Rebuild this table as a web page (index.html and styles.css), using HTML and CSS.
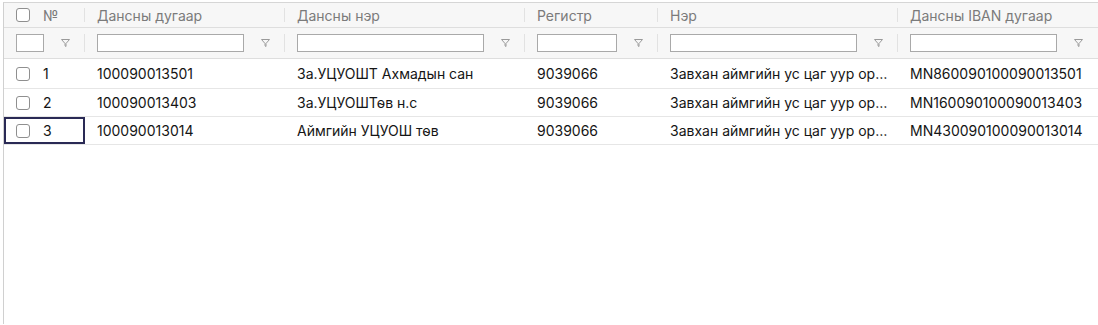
FILE: index.html
```html
<!DOCTYPE html>
<html lang="mn">
<head>
<meta charset="utf-8">
<title>Дансны жагсаалт</title>
<link rel="stylesheet" href="styles.css">
</head>
<body>
<div class="grid">
  <div class="row head">
    <div class="cell sep first"><span class="cb"></span><span class="num">№</span></div>
    <div class="cell sep">Дансны дугаар</div>
    <div class="cell sep">Дансны нэр</div>
    <div class="cell sep">Регистр</div>
    <div class="cell sep">Нэр</div>
    <div class="cell">Дансны IBAN дугаар</div>
  </div>
  <div class="row filter">
    <div class="fcell sep"><span class="inp"></span><span class="fn"><svg width="9" height="8" viewBox="0 0 9 8"><path d="M0.5 0.5H8.5L5 4.5V7.5L4 6.8V4.5Z" fill="none" stroke="#9a9a9a" stroke-width="1" stroke-linejoin="round"/></svg></span></div>
    <div class="fcell sep"><span class="inp"></span><span class="fn"><svg width="9" height="8" viewBox="0 0 9 8"><path d="M0.5 0.5H8.5L5 4.5V7.5L4 6.8V4.5Z" fill="none" stroke="#9a9a9a" stroke-width="1" stroke-linejoin="round"/></svg></span></div>
    <div class="fcell sep"><span class="inp"></span><span class="fn"><svg width="9" height="8" viewBox="0 0 9 8"><path d="M0.5 0.5H8.5L5 4.5V7.5L4 6.8V4.5Z" fill="none" stroke="#9a9a9a" stroke-width="1" stroke-linejoin="round"/></svg></span></div>
    <div class="fcell sep"><span class="inp"></span><span class="fn"><svg width="9" height="8" viewBox="0 0 9 8"><path d="M0.5 0.5H8.5L5 4.5V7.5L4 6.8V4.5Z" fill="none" stroke="#9a9a9a" stroke-width="1" stroke-linejoin="round"/></svg></span></div>
    <div class="fcell sep"><span class="inp"></span><span class="fn"><svg width="9" height="8" viewBox="0 0 9 8"><path d="M0.5 0.5H8.5L5 4.5V7.5L4 6.8V4.5Z" fill="none" stroke="#9a9a9a" stroke-width="1" stroke-linejoin="round"/></svg></span></div>
    <div class="fcell"><span class="inp"></span><span class="fn"><svg width="9" height="8" viewBox="0 0 9 8"><path d="M0.5 0.5H8.5L5 4.5V7.5L4 6.8V4.5Z" fill="none" stroke="#9a9a9a" stroke-width="1" stroke-linejoin="round"/></svg></span></div>
  </div>
  <div class="row data">
    <div class="cell first"><span class="cb"></span><span class="num">1</span></div>
    <div class="cell">100090013501</div>
    <div class="cell">За.УЦУОШТ Ахмадын сан</div>
    <div class="cell">9039066</div>
    <div class="cell clip">Завхан аймгийн ус цаг уур орчны шинжилгээний газар</div>
    <div class="cell">MN860090100090013501</div>
  </div>
  <div class="row data">
    <div class="cell first"><span class="cb"></span><span class="num">2</span></div>
    <div class="cell">100090013403</div>
    <div class="cell">За.УЦУОШТөв н.с</div>
    <div class="cell">9039066</div>
    <div class="cell clip">Завхан аймгийн ус цаг уур орчны шинжилгээний газар</div>
    <div class="cell">MN160090100090013403</div>
  </div>
  <div class="row data">
    <div class="cell first focus"><span class="cb"></span><span class="num">3</span></div>
    <div class="cell">100090013014</div>
    <div class="cell">Аймгийн УЦУОШ төв</div>
    <div class="cell">9039066</div>
    <div class="cell clip">Завхан аймгийн ус цаг уур орчны шинжилгээний газар</div>
    <div class="cell">MN430090100090013014</div>
  </div>
</div>
</body>
</html>
```
FILE: styles.css
```css
html, body {
  margin: 0;
  background: #fff;
}
body {
  padding: 2px 0 0 3px;
  font-family: Inter, "Noto Sans", "DejaVu Sans", sans-serif;
  font-size: 14px;
  color: #151515;
  overflow: hidden;
}
.grid {
  border-top: 1px solid #d6d6d6;
  border-left: 1px solid #d0d0d0;
  height: calc(100vh - 3px);
  box-sizing: border-box;
}
.row {
  display: grid;
  grid-template-columns: 81px 200px 240px 133px 240px 1fr;
}
.head {
  background: #f7f7f7;
  color: #7b7b7b;
  height: 24px;
  border-bottom: 1px solid #dedede;
}
.filter {
  background: #f7f7f7;
  height: 30px;
  border-bottom: 1px solid #dedede;
}
.data {
  height: 27px;
  border-bottom: 1px solid #e6e6e6;
}
.filter + .data {
  height: 29px;
}
.cell {
  display: flex;
  align-items: center;
  padding: 0 10px 0 12px;
  white-space: nowrap;
  overflow: hidden;
  min-width: 0;
}
.clip {
  display: block;
  line-height: 27px;
  text-overflow: ellipsis;
}
.filter + .data .clip {
  line-height: 29px;
}
.sep {
  background-image: linear-gradient(#e2e2e2, #e2e2e2);
  background-position: right center;
  background-size: 1px 14px;
  background-repeat: no-repeat;
}
.filter .sep {
  background-size: 1px 18px;
}
.first {
  padding-left: 12px;
}
.cb {
  display: inline-block;
  width: 12px;
  height: 12px;
  border: 1px solid #8f8f8f;
  border-radius: 3px;
  background: #fff;
  flex: none;
}
.num {
  margin-left: 13px;
}
.focus {
  outline: 2px solid #2a2a55;
  outline-offset: -2px;
}
.fcell {
  display: flex;
  align-items: center;
  padding-left: 12px;
  min-width: 0;
}
.inp {
  flex: 1;
  min-width: 0;
  height: 16px;
  border: 1px solid #a9a9a9;
  background: #fff;
}
.fn {
  width: 41px;
  flex: none;
  display: flex;
  justify-content: center;
  align-items: center;
  padding-left: 2px;
  box-sizing: border-box;
}
.fn svg {
  display: block;
}
```
